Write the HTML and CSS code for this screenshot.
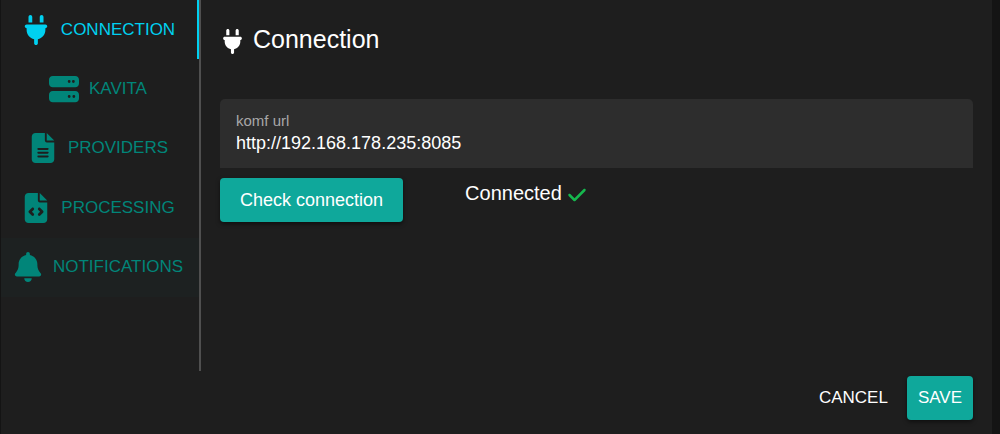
FILE: index.html
```html
<!DOCTYPE html>
<html lang="en">
<head>
<meta charset="utf-8">
<meta name="viewport" content="width=device-width, initial-scale=1">
<title>Connection settings</title>
<link rel="stylesheet" href="styles.css">
</head>
<body>
<div class="dialog">
  <div class="body">
    <div class="sidebar">
      <nav class="tabs" role="tablist" aria-label="Settings">
        <button class="tab active" role="tab" aria-selected="true" type="button">
          <svg class="icon" viewBox="0 0 384 512" aria-hidden="true"><path d="M96 0C78.3 0 64 14.3 64 32v96h64V32c0-17.7-14.3-32-32-32zM288 0c-17.7 0-32 14.3-32 32v96h64V32c0-17.7-14.3-32-32-32zM32 160c-17.7 0-32 14.3-32 32s14.3 32 32 32v32c0 77.4 55 142 128 156.8V480c0 17.7 14.3 32 32 32s32-14.3 32-32V412.8C297 398 352 333.4 352 256V224c17.7 0 32-14.3 32-32s-14.3-32-32-32H32z"/></svg>
          <span>CONNECTION</span>
        </button>
        <button class="tab" role="tab" aria-selected="false" type="button">
          <svg class="icon" viewBox="0 0 512 512" aria-hidden="true"><path d="M64 32C28.7 32 0 60.7 0 96v64c0 35.3 28.7 64 64 64H448c35.3 0 64-28.7 64-64V96c0-35.3-28.7-64-64-64H64zm280 72a24 24 0 1 1 0 48 24 24 0 1 1 0-48zm48 24a24 24 0 1 1 48 0 24 24 0 1 1 -48 0zM64 288c-35.3 0-64 28.7-64 64v64c0 35.3 28.7 64 64 64H448c35.3 0 64-28.7 64-64V352c0-35.3-28.7-64-64-64H64zm280 72a24 24 0 1 1 0 48 24 24 0 1 1 0-48zm56 24a24 24 0 1 1 48 0 24 24 0 1 1 -48 0z"/></svg>
          <span>KAVITA</span>
        </button>
        <button class="tab" role="tab" aria-selected="false" type="button">
          <svg class="icon" viewBox="0 0 384 512" aria-hidden="true"><path fill-rule="evenodd" d="M64 0C28.7 0 0 28.7 0 64V448c0 35.3 28.7 64 64 64H320c35.3 0 64-28.7 64-64V160H256c-17.7 0-32-14.3-32-32V0H64zM256 0V128H384L256 0zM112 256H272c8.8 0 16 7.2 16 16s-7.2 16-16 16H112c-8.8 0-16-7.2-16-16s7.2-16 16-16zm0 64H272c8.8 0 16 7.2 16 16s-7.2 16-16 16H112c-8.8 0-16-7.2-16-16s7.2-16 16-16zm0 64H272c8.8 0 16 7.2 16 16s-7.2 16-16 16H112c-8.8 0-16-7.2-16-16s7.2-16 16-16z"/></svg>
          <span>PROVIDERS</span>
        </button>
        <button class="tab" role="tab" aria-selected="false" type="button">
          <svg class="icon" viewBox="0 0 384 512" aria-hidden="true"><path fill-rule="evenodd" d="M64 0C28.7 0 0 28.7 0 64V448c0 35.3 28.7 64 64 64H320c35.3 0 64-28.7 64-64V160H256c-17.7 0-32-14.3-32-32V0H64zM256 0V128H384L256 0zM153 289l-31 31 31 31c9.4 9.4 9.4 24.6 0 33.9s-24.6 9.4-33.9 0L71 337c-9.4-9.4-9.4-24.6 0-33.9l48-48c9.4-9.4 24.6-9.4 33.9 0s9.4 24.6 0 33.9zM265 255l48 48c9.4 9.4 9.4 24.6 0 33.9l-48 48c-9.4 9.4-24.6 9.4-33.9 0s-9.4-24.6 0-33.9l31-31-31-31c-9.4-9.4-9.4-24.6 0-33.9s24.6-9.4 33.9 0z"/></svg>
          <span>PROCESSING</span>
        </button>
        <button class="tab hovered" role="tab" aria-selected="false" type="button">
          <svg class="icon" viewBox="0 0 448 512" aria-hidden="true"><path d="M224 0c-17.7 0-32 14.3-32 32V51.2C119 66 64 130.6 64 208v18.8c0 47-17.3 92.4-48.5 127.6l-7.4 8.3c-8.4 9.4-10.4 22.9-5.3 34.4S19.4 416 32 416H416c12.6 0 24-7.4 29.2-18.9s3.1-25-5.3-34.4l-7.4-8.3C401.3 319.2 384 273.9 384 226.8V208c0-77.4-55-142-128-156.8V32c0-17.7-14.3-32-32-32zm45.3 493.3c12-12 18.7-28.3 18.7-45.3H160c0 17 6.7 33.3 18.7 45.3s28.3 18.7 45.3 18.7s33.3-6.7 45.3-18.7z"/></svg>
          <span>NOTIFICATIONS</span>
        </button>
      </nav>
    </div>
    <main class="panel">
      <h1 class="title">
        <svg class="title-icon" viewBox="0 0 384 512" aria-hidden="true"><path d="M96 0C78.3 0 64 14.3 64 32v96h64V32c0-17.7-14.3-32-32-32zM288 0c-17.7 0-32 14.3-32 32v96h64V32c0-17.7-14.3-32-32-32zM32 160c-17.7 0-32 14.3-32 32s14.3 32 32 32v32c0 77.4 55 142 128 156.8V480c0 17.7 14.3 32 32 32s32-14.3 32-32V412.8C297 398 352 333.4 352 256V224c17.7 0 32-14.3 32-32s-14.3-32-32-32H32z"/></svg>
        <span>Connection</span>
      </h1>
      <div class="field">
        <label class="label" for="komf-url">komf url</label>
        <input class="input" id="komf-url" type="text" value="http://192.168.178.235:8085">
      </div>
      <div class="check-row">
        <button class="button check" type="button">Check connection</button>
        <div class="status" role="status">
          <span>Connected</span>
          <svg class="tick" viewBox="0 0 448 512" aria-hidden="true"><path d="M438.6 105.4c12.5 12.5 12.5 32.8 0 45.3l-256 256c-12.5 12.5-32.8 12.5-45.3 0l-128-128c-12.5-12.5-12.5-32.8 0-45.3s32.8-12.5 45.3 0L160 338.7 393.4 105.4c12.5-12.5 32.8-12.5 45.3 0z"/></svg>
        </div>
      </div>
    </main>
  </div>
  <footer class="actions">
    <button class="button plain" type="button">CANCEL</button>
    <button class="button save" type="button">SAVE</button>
  </footer>
</div>
</body>
</html>
```
FILE: styles.css
```css
* {
  box-sizing: border-box;
}

body {
  margin: 0;
  padding: 0 8px 0 1px;
  min-height: 100vh;
  display: flex;
  background: #141414;
  color: #fff;
  font-family: "Liberation Sans", Arial, sans-serif;
}

button,
input {
  margin: 0;
  border: 0;
  font-family: inherit;
  color: inherit;
}

button {
  cursor: pointer;
}

svg {
  fill: currentColor;
  flex: none;
}

.dialog {
  flex: 1;
  display: flex;
  flex-direction: column;
  background: #1e1e1e;
}

.body {
  flex: 1;
  display: flex;
}

.sidebar {
  flex: none;
  width: 200px;
  border-right: 2px solid #4f4f4f;
}

.tabs {
  display: grid;
  grid-auto-rows: 1fr;
  height: 297px;
}

.tab {
  display: flex;
  align-items: center;
  justify-content: center;
  gap: 10px;
  padding: 0 4px 0 0;
  background: none;
  color: #018579;
  font-size: 17px;
}

.tab.active {
  color: #00d0f0;
  box-shadow: inset -2px 0 #00d0f0;
}

.tab.hovered {
  background: #1d2121;
}

.icon {
  width: 30px;
  height: 30px;
}

.panel {
  flex: 1;
  padding: 24px 19px 0;
}

.title {
  display: flex;
  align-items: center;
  gap: 8px;
  margin: 0 0 44px;
  font-size: 25px;
  font-weight: 400;
  line-height: 31px;
}

.title-icon {
  width: 25px;
  height: 25px;
  margin-top: 4px;
}

.field {
  display: flex;
  flex-direction: column;
  padding: 13px 16px 12px;
  border-radius: 5px 5px 0 0;
  background: #2d2d2d;
}

.label {
  color: #a8a8a8;
  font-size: 15px;
  line-height: 18px;
}

.input {
  width: 100%;
  height: 26px;
  padding: 0;
  background: none;
  outline: 0;
  font-size: 18px;
}

.check-row {
  display: flex;
  align-items: flex-start;
  gap: 62px;
  margin-top: 10px;
}

.button {
  height: 44px;
  padding: 0 11px;
  border-radius: 4px;
  font-size: 17px;
}

.check,
.save {
  background: #0fa89b;
  box-shadow: 0 2px 4px rgba(0, 0, 0, 0.5);
}

.check {
  padding: 0 20px;
  font-size: 18px;
}

.plain {
  background: none;
}

.status {
  display: flex;
  align-items: center;
  gap: 5px;
  font-size: 20px;
  line-height: 30px;
}

.tick {
  width: 20px;
  height: 20px;
  margin-top: 3px;
  color: #16b84e;
}

.actions {
  display: flex;
  justify-content: flex-end;
  gap: 8px;
  padding: 5px 19px 14px;
}
```
